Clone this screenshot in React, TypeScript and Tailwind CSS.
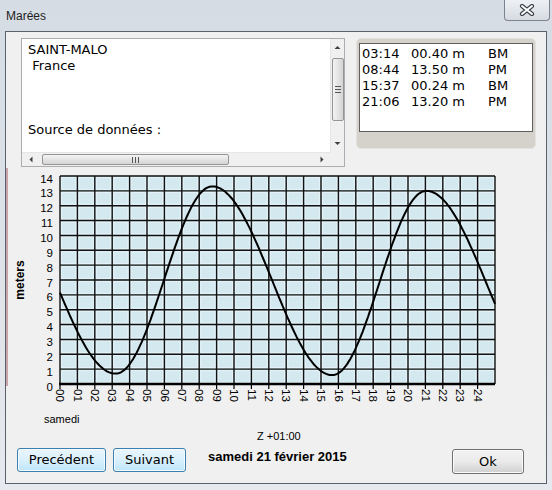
import React from "react";

const X0 = 60;
const DX = 17.4;
const Y0 = 176;
const YB = 384;
const DY = (YB - Y0) / 14;

// high / low waters used to draw the curve (hours, meters)
const EXT: [number, number][] = [
  [-3.8, 13.3],
  [3.2, 0.7],
  [8.75, 13.3],
  [15.65, 0.6],
  [21.05, 13.0],
  [27.95, 0.6],
];

function tide(t: number) {
  for (let i = 0; i < EXT.length - 1; i++) {
    const [t0, h0] = EXT[i];
    const [t1, h1] = EXT[i + 1];
    if (t >= t0 && t <= t1) {
      const f = (t - t0) / (t1 - t0);
      return h0 + ((h1 - h0) * (1 - Math.cos(Math.PI * f))) / 2;
    }
  }
  return 0;
}

const curve = Array.from({ length: 251 }, (_, i) => {
  const t = i / 10;
  return `${(X0 + t * DX).toFixed(1)},${(YB - tide(t) * DY).toFixed(1)}`;
}).join(" ");

const tides = [
  ["03:14", "00.40 m", "BM"],
  ["08:44", "13.50 m", "PM"],
  ["15:37", "00.24 m", "BM"],
  ["21:06", "13.20 m", "PM"],
];

function Arrow({ dir }: { dir: "up" | "down" | "left" | "right" }) {
  const d =
    dir === "up"
      ? "M0.5 4 L3.5 1 L6.5 4 Z"
      : dir === "down"
        ? "M0.5 1 L3.5 4 L6.5 1 Z"
        : dir === "left"
          ? "M4.5 0.5 L1.5 3.5 L4.5 6.5 Z"
          : "M1.5 0.5 L4.5 3.5 L1.5 6.5 Z";
  const vertical = dir === "up" || dir === "down";
  return (
    <svg width={vertical ? 7 : 6} height={vertical ? 5 : 7}>
      <path d={d} fill="#404040" />
    </svg>
  );
}

function TideChart() {
  const cells = [];
  for (let c = 0; c < 25; c++) {
    for (let r = 0; r < 14; r++) {
      const x = X0 + c * DX;
      const y = Y0 + r * DY;
      cells.push(
        <g key={`${c}-${r}`}>
          <rect x={x} y={y} width={DX} height={DY} fill="#d3e8ef" />
          <rect
            x={x + 1.6}
            y={y + 1.6}
            width={DX - 3.2}
            height={DY - 3.2}
            fill="none"
            stroke="#e6f3f7"
            strokeWidth={1}
          />
        </g>
      );
    }
  }

  return (
    <svg width={538} height={244} viewBox="8 168 538 244" className="block">
      {cells}
      {Array.from({ length: 26 }, (_, c) => (
        <line
          key={`v${c}`}
          x1={X0 + c * DX}
          x2={X0 + c * DX}
          y1={Y0}
          y2={YB}
          stroke="#111"
          strokeWidth={1.4}
        />
      ))}
      {Array.from({ length: 15 }, (_, r) => (
        <line
          key={`h${r}`}
          x1={X0}
          x2={X0 + 25 * DX}
          y1={Y0 + r * DY}
          y2={Y0 + r * DY}
          stroke="#111"
          strokeWidth={1.4}
        />
      ))}
      <line x1={X0 - 1} x2={X0 + 25 * DX} y1={YB} y2={YB} stroke="#000" strokeWidth={2.6} />
      {Array.from({ length: 25 }, (_, h) => (
        <line
          key={`t${h}`}
          x1={X0 + h * DX}
          x2={X0 + h * DX}
          y1={YB}
          y2={YB + 5}
          stroke="#000"
          strokeWidth={1.2}
        />
      ))}
      <polyline points={curve} fill="none" stroke="#000" strokeWidth={2} />
      <g fontFamily="'Liberation Sans', Arial, sans-serif" fontSize={11.5} fill="#000">
        {Array.from({ length: 15 }, (_, k) => (
          <text key={`y${k}`} x={53} y={YB - k * DY + 6.5} textAnchor="end">
            {k}
          </text>
        ))}
        {Array.from({ length: 25 }, (_, h) => (
          <text
            key={`x${h}`}
            transform={`translate(${(X0 + h * DX - 3.8).toFixed(1)},389) rotate(90)`}
          >
            {String(h).padStart(2, "0")}
          </text>
        ))}
        <text
          transform="translate(24,280) rotate(-90)"
          textAnchor="middle"
          fontWeight="bold"
          fontSize={12}
        >
          meters
        </text>
      </g>
    </svg>
  );
}

export default function App() {
  return (
    <div className="w-[552px] h-[490px] overflow-hidden bg-linear-to-b from-[#d5dce4] via-[#dde2e8] to-[#e6e9ed] font-['DejaVu_Sans',sans-serif] text-black">
      {/* title bar */}
      <div className="relative h-[31px]">
        <span className="absolute left-[6px] top-[8px] text-[12px] leading-[16px] font-['Liberation_Sans',Arial,sans-serif] text-[#1e1e1e]">
          Marées
        </span>
        <div className="absolute left-[504px] top-0 w-[46px] h-[21px] rounded-b-[4px] border border-t-0 border-[#7b848e] bg-linear-to-b from-[#eef1f4] to-[#d6dbe1] flex items-center justify-center">
          <svg width={16} height={12}>
            <path d="M3 2 L13 10 M13 2 L3 10" stroke="#3b4048" strokeWidth={4.2} strokeLinecap="round" />
            <path d="M3 2 L13 10 M13 2 L3 10" stroke="#ffffff" strokeWidth={2} strokeLinecap="round" />
          </svg>
        </div>
      </div>

      {/* client area */}
      <div className="ml-[5px] w-[542px] h-[453px] border border-[#59626c] bg-[#f0f0f0]">
        <div className="flex pt-[6px] pl-[15px]">
          {/* text box */}
          <div className="w-[324px] h-[129px] border border-[#abadb3] bg-white flex flex-col">
            <div className="flex h-[113px]">
              <div className="flex-1 pl-[6px] pt-[2.5px] text-[13px] leading-[16px] whitespace-pre">
                {"SAINT-MALO\n France\n\n\n\nSource de données :"}
              </div>
              <div className="w-[14px] flex flex-col bg-[#f0f0f0] border-l border-[#e6e6e6]">
                <div className="h-[17px] flex items-center justify-center">
                  <Arrow dir="up" />
                </div>
                <div className="flex-1">
                  <div className="mt-[2px] ml-[1px] w-[12px] h-[63px] rounded-[2px] border border-[#959595] bg-linear-to-r from-[#f4f4f4] to-[#d4d4d4] flex flex-col items-center justify-center gap-[2px]">
                    <div className="w-[6px] h-px bg-[#555]" />
                    <div className="w-[6px] h-px bg-[#555]" />
                    <div className="w-[6px] h-px bg-[#555]" />
                  </div>
                </div>
                <div className="h-[17px] flex items-center justify-center">
                  <Arrow dir="down" />
                </div>
              </div>
            </div>
            <div className="flex h-[14px]">
              <div className="w-[308px] flex bg-[#f0f0f0] border-t border-[#e6e6e6]">
                <div className="w-[17px] flex items-center justify-center">
                  <Arrow dir="left" />
                </div>
                <div className="flex-1">
                  <div className="ml-[3px] mt-px w-[187px] h-[11px] rounded-[2px] border border-[#959595] bg-linear-to-b from-[#f4f4f4] to-[#d4d4d4] flex items-center justify-center gap-[2px]">
                    <div className="w-px h-[6px] bg-[#555]" />
                    <div className="w-px h-[6px] bg-[#555]" />
                    <div className="w-px h-[6px] bg-[#555]" />
                  </div>
                </div>
                <div className="w-[17px] flex items-center justify-center">
                  <Arrow dir="right" />
                </div>
              </div>
              <div className="flex-1 bg-[#f0f0f0]" />
            </div>
          </div>

          {/* high / low list */}
          <div className="ml-[11px] w-[180px] h-[111px] rounded-[5px] bg-[#d5d2cc] border border-[#e4e2de] pt-[4px] px-[2px]">
            <div className="h-[89px] border border-[#5e5e5e] bg-white pl-[2px] pt-[2px] text-[13px] leading-[16px]">
              {tides.map(([t, h, k]) => (
                <div key={t} className="flex whitespace-pre">
                  <span className="w-[49px]">{t}</span>
                  <span className="w-[77px]">{h}</span>
                  <span>{k}</span>
                </div>
              ))}
            </div>
          </div>
        </div>

        {/* chart */}
        <div className="flex mt-[1px]">
          <div className="w-[2px] h-[218px] bg-[#c9a4a8]" />
          <TideChart />
        </div>

        <div className="pl-[38px] h-[14px] text-[11px] leading-[14px] font-['Liberation_Sans',Arial,sans-serif]">
          samedi
        </div>
        <div className="mt-[3px] pl-[251px] h-[14px] text-[11px] leading-[14px] font-['Liberation_Sans',Arial,sans-serif]">
          Z +01:00
        </div>

        {/* buttons */}
        <div className="mt-[5px] flex items-start pl-[11px] pr-[22px]">
          <button className="w-[89px] h-[24px] rounded-[3px] border border-[#3c7fb1] bg-linear-to-b from-[#eaf6fd] via-[#d9f0fc] to-[#bee6fd] shadow-[inset_0_0_0_1px_#f4fbff] text-[13px] leading-[16px]">
            Precédent
          </button>
          <button className="ml-[7px] w-[73px] h-[24px] rounded-[3px] border border-[#3c7fb1] bg-linear-to-b from-[#eaf6fd] via-[#d9f0fc] to-[#bee6fd] shadow-[inset_0_0_0_1px_#f4fbff] text-[13px] leading-[16px]">
            Suivant
          </button>
          <span className="ml-[22px] mt-px text-[13px] leading-[15px] font-bold font-['Liberation_Sans',Arial,sans-serif]">
            samedi 21 février 2015
          </span>
          <button className="ml-auto mt-px w-[72px] h-[25px] rounded-[3px] border border-[#707070] bg-linear-to-b from-[#f2f2f2] via-[#ebebeb] to-[#cfcfcf] shadow-[inset_0_0_0_1px_#fbfbfb] text-[13px] leading-[16px]">
            Ok
          </button>
        </div>
      </div>
    </div>
  );
}
